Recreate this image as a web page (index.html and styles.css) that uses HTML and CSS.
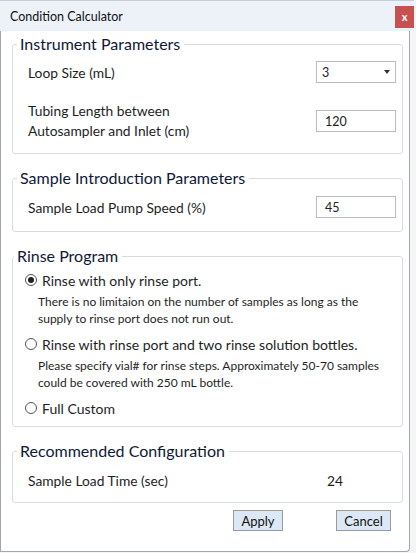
FILE: index.html
```html
<!DOCTYPE html>
<html lang="en">
<head>
    <meta charset="UTF-8">
    <meta name="viewport" content="width=device-width, initial-scale=1.0">
    <title>Condition Calculator</title>
    <link rel="stylesheet" href="styles.css">
</head>
<body>
    <div class="window">
        <div class="titleBar">
            <span class="titleText">Condition Calculator</span>
            <span class="closeBtn">x</span>
        </div>
        <div class="content">
            <fieldset class="group groupInstrument">
                <legend>Instrument Parameters</legend>
                <div class="row rowLoop">
                    <label>Loop Size (mL)</label>
                    <div class="selectBox">
                        <span>3</span>
                        <span class="arrow"></span>
                    </div>
                </div>
                <div class="row rowTubing">
                    <label>Tubing Length between<br>Autosampler and Inlet (cm)</label>
                    <input class="textBox" type="text" value="120">
                </div>
            </fieldset>

            <fieldset class="group groupSample">
                <legend>Sample Introduction Parameters</legend>
                <div class="row">
                    <label>Sample Load Pump Speed (%)</label>
                    <input class="textBox" type="text" value="45">
                </div>
            </fieldset>

            <fieldset class="group groupRinse">
                <legend>Rinse Program</legend>
                <div class="radioRow">
                    <span class="radio checked"></span>
                    <span>Rinse with only rinse port.</span>
                </div>
                <p class="note">There is no limitaion on the number of samples as long as the<br>supply to rinse port does not run out.</p>
                <div class="radioRow">
                    <span class="radio"></span>
                    <span>Rinse with rinse port and two rinse solution bottles.</span>
                </div>
                <p class="note">Please specify vial# for rinse steps. Approximately 50-70 samples<br>could be covered with 250 mL bottle.</p>
                <div class="radioRow">
                    <span class="radio"></span>
                    <span>Full Custom</span>
                </div>
            </fieldset>

            <fieldset class="group groupResult">
                <legend>Recommended Configuration</legend>
                <div class="row">
                    <label>Sample Load Time (sec)</label>
                    <span class="resultValue">24</span>
                </div>
            </fieldset>

            <div class="buttons">
                <button class="btn btnApply">Apply</button>
                <button class="btn btnCancel">Cancel</button>
            </div>
        </div>
    </div>
</body>
</html>
```

FILE: styles.css
```css
* {
    box-sizing: border-box;
}
body {
    margin: 0;
    background: #f4f5f7;
    font-family: Lato, "Open Sans", sans-serif;
    color: #1e1e1e;
}
.window {
    width: 414px;
    height: 553px;
    display: flex;
    flex-direction: column;
}
.titleBar {
    height: 31px;
    background: #edf2f9;
    border-top: 1px solid #c9ced6;
    display: flex;
    align-items: center;
    justify-content: space-between;
    padding-left: 10px;
}
.titleText {
    font-size: 12.5px;
    color: #111;
}
.closeBtn {
    width: 19px;
    height: 22px;
    background: #c75050;
    color: #fff;
    font-size: 11px;
    font-weight: bold;
    display: flex;
    align-items: center;
    justify-content: center;
    margin-top: 1px;
}
.content {
    width: 410px;
    height: 521px;
    background: #fff;
    border-left: 1px solid #a6a6a6;
    border-right: 1px solid #a6a6a6;
    border-bottom: 1px solid #a6a6a6;
    border-bottom-right-radius: 4px;
    padding: 2px 6px 0 11px;
}
.group {
    margin: 0;
    border: 1px solid #d5dde3;
    border-radius: 3px;
    padding: 0 6px 0 15px;
}
.group + .group {
    margin-top: 13px;
}
.group legend {
    font-size: 16px;
    line-height: 22px;
    color: #101836;
    padding: 0 4px 0 3px;
    margin-left: -11px;
}
.row {
    display: flex;
    align-items: center;
    justify-content: space-between;
    height: 24px;
    font-size: 13.8px;
}
.groupInstrument {
    padding-top: 5px;
    padding-bottom: 12px;
}
.rowTubing {
    height: 40px;
    margin-top: 17px;
    line-height: 20px;
}
.groupSample {
    padding-top: 6px;
    padding-bottom: 12px;
}
.selectBox,
.textBox {
    width: 80px;
    height: 22px;
    border: 1px solid #bcbcbc;
    background: #fff;
    font-family: inherit;
    font-size: 12.5px;
    color: #222;
}
.selectBox {
    display: flex;
    align-items: center;
    justify-content: space-between;
    padding: 0 5px 0 5px;
}
.arrow {
    width: 0;
    height: 0;
    border-left: 3.5px solid transparent;
    border-right: 3.5px solid transparent;
    border-top: 4px solid #333;
}
.textBox {
    padding: 0 8px;
    outline: none;
}
.groupRinse {
    padding-top: 3px;
    padding-bottom: 8px;
    padding-left: 12px;
}
.radioRow {
    display: flex;
    align-items: center;
    height: 20px;
    font-size: 14px;
}
.radio {
    width: 12px;
    height: 12px;
    border: 1px solid #555;
    border-radius: 50%;
    margin-right: 5px;
    display: flex;
    align-items: center;
    justify-content: center;
}
.radio.checked::after {
    content: "";
    width: 6px;
    height: 6px;
    border-radius: 50%;
    background: #222;
}
.note {
    margin: 3px 0 7px 0;
    padding-left: 13px;
    font-size: 12px;
    line-height: 17px;
}
.groupResult {
    padding-top: 6px;
    padding-bottom: 10px;
}
.resultValue {
    width: 80px;
    padding-left: 11px;
}
.buttons {
    display: flex;
    justify-content: flex-end;
    margin-top: 7px;
    padding-right: 12px;
}
.btn {
    height: 21px;
    background: #dce8f5;
    border: 1px solid #9a9a9a;
    font-family: inherit;
    font-size: 13px;
    color: #111;
    padding: 0;
}
.btnApply {
    width: 50px;
}
.btnCancel {
    width: 55px;
    margin-left: 53px;
}
```
